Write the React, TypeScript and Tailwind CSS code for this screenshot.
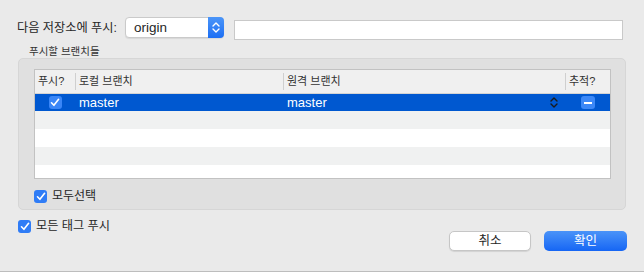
const font = { fontFamily: '"Liberation Sans", "Noto Sans CJK KR", sans-serif' };

function Check({ className }: { className: string }) {
  return (
    <span className={`flex items-center justify-center rounded-[3px] ${className}`}>
      <svg width="10" height="9" viewBox="0 0 10 9" fill="none">
        <path d="M1.5 4.8 L3.9 7.3 L8.6 1.3" stroke="white" strokeWidth="1.6" strokeLinecap="round" strokeLinejoin="round" />
      </svg>
    </span>
  );
}

function Updown({ color }: { color: string }) {
  return (
    <svg width="8" height="13" viewBox="0 0 8 13" fill="none">
      <path d="M1 5 L4 2 L7 5" stroke={color} strokeWidth="1.4" strokeLinecap="round" strokeLinejoin="round" />
      <path d="M1 8 L4 11 L7 8" stroke={color} strokeWidth="1.4" strokeLinecap="round" strokeLinejoin="round" />
    </svg>
  );
}

const rows = ['bg-[#f0f1f1]', 'bg-white', 'bg-[#f0f1f1]', 'bg-white'];

export default function App() {
  return (
    <div className="w-[644px] h-[272px] bg-[#eaeaea] border-b border-[#bdbdbd] text-[#262626] overflow-hidden" style={font}>
      {/* remote row */}
      <div className="flex items-start pt-[17px] pl-[17px]">
        <span className="w-[108px] text-[12.2px] leading-[22px]">다음 저장소에 푸시:</span>
        <div className="flex w-[99px] h-[21px] rounded-[4px] bg-white border border-[#cacaca] shadow-[0_1px_1px_rgba(0,0,0,0.08)]">
          <span className="flex-1 pl-[8px] text-[13.5px] leading-[19px]">origin</span>
          <span className="flex w-[16px] items-center justify-center -my-px -mr-px rounded-r-[4px] bg-gradient-to-b from-[#4b95f8] to-[#1b6ef4]">
            <Updown color="white" />
          </span>
        </div>
        <div className="ml-[10px] mt-[3px] w-[389px] h-[20px] bg-white border border-[#c9c9c9]" />
      </div>

      <div className="pl-[29px] pt-[5px] text-[10.5px] leading-[13px] text-[#333]">푸시할 브랜치들</div>

      {/* group box */}
      <div className="mx-[18px] h-[152px] rounded-[5px] bg-[#e0e0e0] border border-[#d6d6d6] pt-[10px] pl-[15px] pr-[14px]">
        <div className="h-[110px] bg-white border border-[#c2c2c2] overflow-hidden">
          <div className="flex h-[24px] bg-[#f0f0f0] border-b border-[#d4d4d4] text-[11px] text-[#333] items-center">
            <div className="w-[40px] pl-[3px]">푸시?</div>
            <div className="w-[208px] h-[17px] border-l border-[#cfcfcf] pl-[3px] leading-[17px]">로컬 브랜치</div>
            <div className="w-[282px] h-[17px] border-l border-[#cfcfcf] pl-[3px] leading-[17px]">원격 브랜치</div>
            <div className="flex-1 h-[17px] border-l border-[#cfcfcf] pl-[3px] leading-[17px]">추적?</div>
          </div>
          <div className="flex h-[17px] bg-[#0058d0] text-white text-[13px] items-center">
            <div className="w-[40px] flex justify-center">
              <Check className="w-[13px] h-[13px] bg-[#3a86f7]" />
            </div>
            <div className="w-[208px] pl-[4px]">master</div>
            <div className="w-[282px] pl-[4px] pr-[7px] flex items-center justify-between">
              <span>master</span>
              <Updown color="#1a1a1a" />
            </div>
            <div className="flex-1 flex justify-center">
              <span className="flex w-[14px] h-[13px] rounded-[3px] bg-[#3c88f7] items-center justify-center">
                <span className="w-[8px] h-[2px] bg-white" />
              </span>
            </div>
          </div>
          {rows.map((c, i) => (
            <div key={i} className={`h-[18px] ${c}`} />
          ))}
        </div>
        <div className="flex items-center gap-[5px] mt-[8px] text-[12px]">
          <Check className="w-[13px] h-[13px] bg-[#2f7cf6]" />
          <span>모두선택</span>
        </div>
      </div>

      {/* bottom row */}
      <div className="flex justify-between pl-[18px] pr-[17px]">
        <div className="flex items-center gap-[5px] mt-[9px] h-[14px] text-[12.2px]">
          <Check className="w-[13px] h-[13px] bg-[#2f7cf6]" />
          <span>모든 태그 푸시</span>
        </div>
        <div className="flex gap-[13px] mt-[21px]">
          <button className="w-[82px] h-[20px] rounded-[5px] bg-white border border-[#c6c6c6] shadow-[0_1px_1px_rgba(0,0,0,0.1)] text-[12.5px] leading-none text-[#262626]">
            취소
          </button>
          <button className="w-[83px] h-[20px] rounded-[5px] bg-gradient-to-b from-[#4a93f8] to-[#1565f4] text-[12.5px] leading-none text-white">
            확인
          </button>
        </div>
      </div>
    </div>
  );
}
